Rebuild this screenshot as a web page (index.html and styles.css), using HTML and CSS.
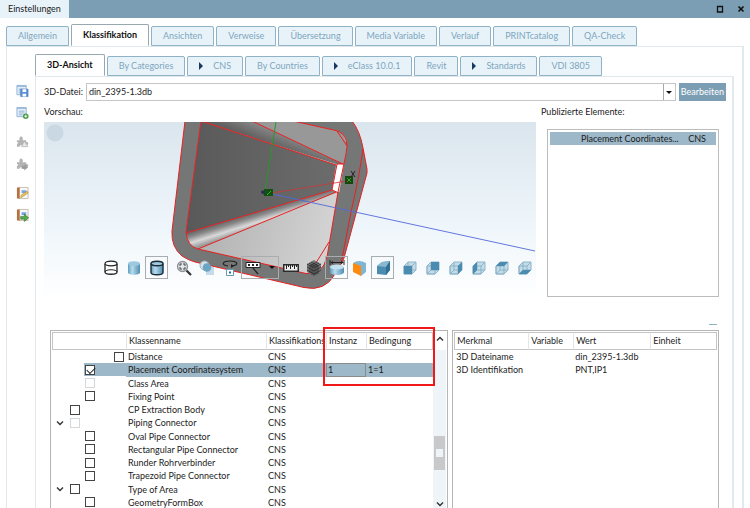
FILE: index.html
```html
<!DOCTYPE html>
<html lang="de">
<head>
<meta charset="utf-8">
<title>Einstellungen</title>
<link rel="stylesheet" href="styles.css">
</head>
<body>
<svg class="defs" aria-hidden="true">
  <defs>
    <linearGradient id="steel" x1="0" x2="1"><stop offset="0" stop-color="#5f9dc0"/><stop offset=".35" stop-color="#b9dcec"/><stop offset="1" stop-color="#4d8db3"/></linearGradient>
    <symbol id="cube" viewBox="0 0 16 16">
      <path d="M2 6l4-4h8v8l-4 4H2z" fill="#c4dce8"/>
      <path d="M2 6h8v8H2zM10 6l4-4M6 2v8h8M6 10l-4 4" fill="none" stroke="#7fa9c0" stroke-width=".8"/>
      <path d="M2 6l4-4h8v8l-4 4H2z" fill="none" stroke="#8fb5c9"/>
    </symbol>
    <symbol id="sheet" viewBox="0 0 14 14">
      <path d="M1 1h10v10H1z" fill="#e3eef8" stroke="#8fb2d6"/>
      <path d="M1 2h10M3 5h6M3 7h6M3 9h4" stroke="#8fb2d6" fill="none"/>
    </symbol>
    <symbol id="puzzle" viewBox="0 0 14 14">
      <path d="M1 5h3c-1-2 0-4 1.500-4S8 3 7 5h4v2c3-1 3 4 0 3v2H7c0-2-3-2-3 0H1v-3c2 0 2-2 0-2z" fill="#b4b4b4"/>
    </symbol>
    <symbol id="book" viewBox="0 0 14 14">
      <path d="M3 1h10v12H3z" fill="#f4f7fb" stroke="#c9bba8"/>
      <path d="M1 1h3v12H1z" fill="#b5713f"/>
      <path d="M6 4h5v3H6z" fill="#79a5dc"/>
    </symbol>
  </defs>
</svg>

<header class="titlebar">
  <h1 class="title">Einstellungen</h1>
  <div class="window-buttons">
    <button type="button" aria-label="Maximieren"><svg viewBox="0 0 8 8"><path d="M1 1.500h6M1.500 1v6h5V1" fill="none" stroke="#111" stroke-width="1.300"/></svg></button>
    <button type="button" aria-label="Schließen"><svg viewBox="0 0 8 8"><path d="M1.500 1.500l5 5M6.500 1.500l-5 5" stroke="#111" stroke-width="1.700"/></svg></button>
  </div>
</header>

<nav class="tabs tabs-main">
  <button type="button">Allgemein</button>
  <button type="button" class="active">Klassifikation</button>
  <button type="button">Ansichten</button>
  <button type="button">Verweise</button>
  <button type="button">Übersetzung</button>
  <button type="button">Media Variable</button>
  <button type="button">Verlauf</button>
  <button type="button">PRINTcatalog</button>
  <button type="button">QA-Check</button>
</nav>

<main class="panel">
  <aside class="sidebar">
    <div class="tools">
      <button type="button" aria-label="Speichern"><svg viewBox="0 0 14 14"><use href="#sheet"/><path d="M5 5h8v8H5z" fill="#5d90d6" stroke="#3e70b8" stroke-width=".6"/><path d="M7 5h4v3H7zM7 10h4v3H7z" fill="#fff"/></svg></button>
      <button type="button" aria-label="Neu"><svg viewBox="0 0 14 14"><use href="#sheet"/><circle cx="10.500" cy="10.500" r="3" fill="#4d9a4a"/><path d="M10.500 9v3M9 10.500h3" stroke="#fff"/></svg></button>
    </div>
    <div class="tools">
      <button type="button" aria-label="Baustein bearbeiten"><svg viewBox="0 0 14 14"><use href="#puzzle"/><path d="M9 6l4 6H6z" fill="#e6e6e6" stroke="#aaa" stroke-width=".6"/></svg></button>
      <button type="button" aria-label="Baustein übernehmen"><svg viewBox="0 0 14 14"><use href="#puzzle"/><path d="M6 9h3V7l4 3.500-4 3.500v-2H6z" fill="#9d9d9d"/></svg></button>
    </div>
    <div class="tools">
      <button type="button" aria-label="Katalog bearbeiten"><svg viewBox="0 0 14 14"><use href="#book"/><path d="M5 12l1-3 6-4 1 2-6 4z" fill="#edc558" stroke="#a88228" stroke-width=".6"/></svg></button>
      <button type="button" aria-label="Katalog übernehmen"><svg viewBox="0 0 14 14"><use href="#book"/><path d="M5 8.500h4V6l4.500 4L9 14v-2.500H5z" fill="#57a84d" stroke="#2c7029" stroke-width=".6"/></svg></button>
    </div>
  </aside>

  <div class="content">
    <nav class="tabs tabs-sub">
      <button type="button" class="active">3D-Ansicht</button>
      <button type="button">By Categories</button>
      <button type="button"><i class="marker"></i>CNS</button>
      <button type="button">By Countries</button>
      <button type="button"><i class="marker"></i>eClass 10.0.1</button>
      <button type="button">Revit</button>
      <button type="button"><i class="marker"></i>Standards</button>
      <button type="button">VDI 3805</button>
    </nav>

    <section class="page">
      <div class="file-row">
        <label for="file">3D-Datei:</label>
        <div class="combo">
          <select id="file"><option>din_2395-1.3db</option></select>
          <span class="combo-arrow"></span>
        </div>
        <button type="button" class="primary">Bearbeiten</button>
      </div>

      <div class="upper">
        <section class="preview">
          <h2>Vorschau:</h2>
          <div class="viewer">
            <svg class="scene" viewBox="44 122 492 178" role="img" aria-label="3D-Profil">
              <defs>
                <linearGradient id="sky" x1="0" x2="0" y1="0" y2="1"><stop offset="0" stop-color="#dbe5ed"/><stop offset=".55" stop-color="#edf5fa"/><stop offset="1" stop-color="#fff"/></linearGradient>
                <linearGradient id="dark" x1="0" x2="1"><stop offset="0" stop-color="#595959"/><stop offset="1" stop-color="#6c6c6c"/></linearGradient>
                <linearGradient id="floor" x1="0" x2="1" y1="0" y2=".3"><stop offset="0" stop-color="#a4a4a4"/><stop offset="1" stop-color="#d2d2d2"/></linearGradient>
                <linearGradient id="fold" gradientUnits="userSpaceOnUse" x1="250" y1="213" x2="255" y2="229"><stop offset="0" stop-color="#616161"/><stop offset=".3" stop-color="#8a8a8a"/><stop offset=".65" stop-color="#d9d9d9"/><stop offset="1" stop-color="#999"/></linearGradient>
                <linearGradient id="ceil" gradientUnits="userSpaceOnUse" x1="284" y1="150" x2="292" y2="130"><stop offset="0" stop-color="#616161"/><stop offset="1" stop-color="#999"/></linearGradient>
              </defs>
              <rect x="44" y="122" width="492" height="178" fill="url(#sky)"/>
              <circle cx="55" cy="133" r="8.500" fill="#c9d8e2"/>
              <path d="M185 121L172 231Q171 247 182 256Q188 260 195 262L304 287.500Q325 292 335 274Q341 265 344 258L367 173V169L363 148Q360 131 352 121Z" fill="#757777" stroke="#e82020"/>
              <path d="M201 121L186 232Q187 246 198 249L306 273.500Q322 276 327 257L338 192L346 154Q350 136 338 131L293 121Z" fill="url(#floor)"/>
              <path d="M252 121H293L338 131Q349 137 346 154L344 164Z" fill="#989898"/>
              <path d="M201 121H252L343 164H336Z" fill="url(#ceil)"/>
              <path d="M201 121L336 165L332 190L186 233Z" fill="url(#dark)"/>
              <path d="M186 233L332 190L338 192L198 249Q187 245 186 233Z" fill="url(#fold)"/>
              <path d="M337 164H344L339 193L332 190Z" fill="#fff"/>
              <path d="M201 121L186 232Q187 246 198 249L306 273.500Q322 276 327 257L338 192L346 154Q350 136 338 131L293 121M201 121L336 165M252 121L343 164M186 233L332 190M198 249L336 192M337 164H344M332 190L339 193M337 164L332 190M337 131L347 146M329 242L309 274M363 149Q359 178 351 212L341 264" fill="none" stroke="#e82020"/>
              <path d="M276 122L265 190" stroke="#259a28"/>
              <path d="M272 193L347 181" stroke="#cf3535" stroke-width=".8"/>
              <path d="M272 194L535 251" stroke="#5468dd" stroke-width=".9"/>
              <path d="M264 189h9v7h-9z" fill="#12520f"/><path d="M261 191l4-1v5l-4-2z" fill="#25354a"/><path d="M267 195l4-4" stroke="#39ad35"/>
              <path d="M345 176h8v8h-8z" fill="#17470f"/><path d="M347 178l4 4M351 178l-4 4" stroke="#3c9e2c"/><path d="M351 171l4 6M355 171l-4 6" stroke="#222"/>
            </svg>
            <div class="toolbar">
              <button type="button" aria-label="Drahtmodell"><svg viewBox="0 0 16 16"><path d="M2 4v8c0 3 12 3 12 0V4" fill="#fff" stroke="#222" stroke-width="1.300"/><path d="M2 12c0-3 12-3 12 0" fill="none" stroke="#222"/><ellipse cx="8" cy="3.500" rx="6" ry="2.300" fill="#fff" stroke="#222" stroke-width="1.300"/></svg></button>
              <button type="button" aria-label="Schattiert"><svg viewBox="0 0 16 16"><path d="M2 3.500v9c0 3 12 3 12 0v-9" fill="url(#steel)"/><ellipse cx="8" cy="3.500" rx="6" ry="2.300" fill="#9dc9df"/></svg></button>
              <button type="button" class="boxed" aria-label="Schattiert mit Kanten"><svg viewBox="0 0 16 16"><path d="M2 3.500v9c0 3 12 3 12 0v-9" fill="url(#steel)" stroke="#1c2c36" stroke-width="1.400"/><ellipse cx="8" cy="3.500" rx="6" ry="2.300" fill="#9dc9df" stroke="#1c2c36" stroke-width="1.400"/></svg></button>
              <span class="gap"></span>
              <button type="button" aria-label="Zoom"><svg viewBox="0 0 16 16"><circle cx="6.500" cy="6.500" r="5" fill="#e2e6e8" stroke="#8b9297" stroke-width="1.300"/><path d="M4 6V4h2M9 6V4H7M4 7v2h2M9 7v2H7" fill="none" stroke="#444"/><path d="M10.500 10.500l4.500 4.500" stroke="#333" stroke-width="2.200"/></svg></button>
              <button type="button" aria-label="Ansicht"><svg viewBox="0 0 16 16"><circle cx="5.500" cy="5.500" r="4.500" fill="#d4dfe6" stroke="#9fb2be"/><path d="M7 7h8v8H7z" fill="#c5dbe8"/><circle cx="8" cy="7.500" r="4.300" fill="#6ba5c6"/></svg></button>
              <button type="button" aria-label="Drehen"><svg viewBox="0 0 16 16"><path d="M10 6c8-1 5-5-2-5S-2 5 6 6" fill="none" stroke="#222" stroke-width="1.200"/><path d="M9 4v4l3-2z" fill="#222"/><path d="M4.500 9.500h7v6h-7z" fill="#fff" stroke="#659abb"/><path d="M7 11.500h2v2H7z" fill="#236c9b"/></svg></button>
              <button type="button" class="boxed wide" aria-label="Messen"><svg viewBox="0 0 16 16"><path d="M1 2.500h14v5H1z" fill="#fff" stroke="#222"/><path d="M3 5h2M7 5h2M11 5h2" stroke="#222" stroke-width="2"/><path d="M8 8l5 6" stroke="#222" stroke-width="1.300"/></svg><span class="down"></span></button>
              <button type="button" aria-label="Lineal"><svg viewBox="0 0 16 16"><path d="M0 4h16v8H0z" fill="#2c2c2c"/><path d="M1.500 5.500h13v5h-13z" fill="#eee"/><path d="M3.500 5v4M5.500 5v2M7.500 5v4M9.500 5v2M11.500 5v4M13.500 5v2" stroke="#222"/></svg></button>
              <button type="button" aria-label="Netz"><svg viewBox="0 0 16 16"><path d="M8 0l7 4v8l-7 4-7-4V4z" fill="#777"/><path d="M1 4l7 4 7-4M8 8v8M3 3l7 4v8M5 2l7 4v8M13 3L6 7v8M11 2L4 6v7M1 7l7 4 7-4M1 10l7 4 7-4" fill="none" stroke="#1c1c1c" stroke-width=".7"/></svg></button>
              <button type="button" class="boxed" aria-label="Bemaßung"><svg viewBox="0 0 16 16"><path d="M1 7v5c0 4 14 4 14 0V7" fill="url(#steel)"/><ellipse cx="8" cy="7" rx="7" ry="2.500" fill="#c3e1ee"/><path d="M1 0v5M15 0v5M2 2.500h12" stroke="#222"/><path d="M1 2.500l3-1.500v3zM15 2.500l-3-1.500v3z" fill="#222"/></svg></button>
              <button type="button" aria-label="Schnitt"><svg viewBox="0 0 16 16"><path d="M1 3q6-4 13 0v9l-5 4z" fill="#81b6d2"/><path d="M1 3l8 3v10l-8-4z" fill="#ff8a0c"/></svg></button>
              <button type="button" class="boxed" aria-label="Perspektive"><svg viewBox="0 0 16 16"><path d="M2 6l5-4 8-1v9l-4 5-9-1z" fill="#4c8cb1"/><path d="M2 6l5-4 8-1-4 6z" fill="#89b8d0"/><path d="M11 7l4-6v9l-4 5z" fill="#326f94"/></svg></button>
              <span class="gap"></span>
              <button type="button" aria-label="Vorne"><svg viewBox="0 0 16 16"><use href="#cube"/><path d="M2 6h8v8H2z" fill="#4b8bb0"/></svg></button>
              <button type="button" aria-label="Hinten"><svg viewBox="0 0 16 16"><use href="#cube"/><path d="M6 2h8v8H6z" fill="#4b8bb0"/></svg></button>
              <button type="button" aria-label="Rechts"><svg viewBox="0 0 16 16"><use href="#cube"/><path d="M10 6l4-4v8l-4 4z" fill="#4b8bb0"/></svg></button>
              <button type="button" aria-label="Links"><svg viewBox="0 0 16 16"><use href="#cube"/><path d="M2 6l4-4v8l-4 4z" fill="#4b8bb0"/></svg></button>
              <button type="button" aria-label="Oben"><svg viewBox="0 0 16 16"><use href="#cube"/><path d="M2 6l4-4h8l-4 4z" fill="#4b8bb0"/></svg></button>
              <button type="button" aria-label="Unten"><svg viewBox="0 0 16 16"><use href="#cube"/><path d="M2 14l4-4h8l-4 4z" fill="#4b8bb0"/></svg></button>
            </div>
          </div>
        </section>

        <section class="published">
          <h2>Publizierte Elemente:</h2>
          <ul class="listbox">
            <li><span>Placement Coordinates...</span><span>CNS</span></li>
          </ul>
        </section>
      </div>

      <div class="splitter"><span></span></div>

      <div class="lower">
        <section class="tree-pane">
          <table class="grid tree">
            <colgroup><col class="c-node"><col class="c-name"><col class="c-system"><col class="c-inst"><col></colgroup>
            <thead><tr><th></th><th>Klassenname</th><th>Klassifikations</th><th>Instanz</th><th>Bedingung</th></tr></thead>
            <tbody>
              <tr><td><div class="node l4"><input type="checkbox" id="k1"></div></td><td><label for="k1">Distance</label></td><td>CNS</td><td></td><td></td></tr>
              <tr class="selected"><td><div class="node l2"><input type="checkbox" id="k2" checked></div></td><td><label for="k2">Placement Coordinatesystem</label></td><td>CNS</td><td class="focus">1</td><td>1=1</td></tr>
              <tr><td><div class="node l2"><input type="checkbox" id="k3" disabled></div></td><td><label for="k3">Class Area</label></td><td>CNS</td><td></td><td></td></tr>
              <tr><td><div class="node l2"><input type="checkbox" id="k4"></div></td><td><label for="k4">Fixing Point</label></td><td>CNS</td><td></td><td></td></tr>
              <tr><td><div class="node l1"><input type="checkbox" id="k5"></div></td><td><label for="k5">CP Extraction Body</label></td><td>CNS</td><td></td><td></td></tr>
              <tr><td><div class="node l0"><svg class="chev" viewBox="0 0 8 8"><path d="M1 2.500l3 3 3-3" fill="none" stroke="#333" stroke-width="1.400"/></svg><input type="checkbox" id="k6" disabled></div></td><td><label for="k6">Piping Connector</label></td><td>CNS</td><td></td><td></td></tr>
              <tr><td><div class="node l2"><input type="checkbox" id="k7"></div></td><td><label for="k7">Oval Pipe Connector</label></td><td>CNS</td><td></td><td></td></tr>
              <tr><td><div class="node l2"><input type="checkbox" id="k8"></div></td><td><label for="k8">Rectangular Pipe Connector</label></td><td>CNS</td><td></td><td></td></tr>
              <tr><td><div class="node l2"><input type="checkbox" id="k9"></div></td><td><label for="k9">Runder Rohrverbinder</label></td><td>CNS</td><td></td><td></td></tr>
              <tr><td><div class="node l2"><input type="checkbox" id="k10"></div></td><td><label for="k10">Trapezoid Pipe Connector</label></td><td>CNS</td><td></td><td></td></tr>
              <tr><td><div class="node l0"><svg class="chev" viewBox="0 0 8 8"><path d="M1 2.500l3 3 3-3" fill="none" stroke="#333" stroke-width="1.400"/></svg><input type="checkbox" id="k11"></div></td><td><label for="k11">Type of Area</label></td><td>CNS</td><td></td><td></td></tr>
              <tr><td><div class="node l2"><input type="checkbox" id="k12"></div></td><td><label for="k12">GeometryFormBox</label></td><td>CNS</td><td></td><td></td></tr>
            </tbody>
          </table>
          <div class="scrollbar">
            <svg class="chev" viewBox="0 0 8 8"><path d="M1 5.500l3-3 3 3" fill="none" stroke="#333" stroke-width="1.400"/></svg>
            <div class="thumb"></div>
            <svg class="chev" viewBox="0 0 8 8"><path d="M1 2.500l3 3 3-3" fill="none" stroke="#333" stroke-width="1.400"/></svg>
          </div>
          <div class="highlight"></div>
        </section>

        <section class="attr-pane">
          <table class="grid attrs">
            <colgroup><col class="a-key"><col class="a-var"><col class="a-value"><col></colgroup>
            <thead><tr><th>Merkmal</th><th>Variable</th><th>Wert</th><th>Einheit</th></tr></thead>
            <tbody>
              <tr><td>3D Dateiname</td><td></td><td>din_2395-1.3db</td><td></td></tr>
              <tr><td>3D Identifikation</td><td></td><td>PNT,IP1</td><td></td></tr>
            </tbody>
          </table>
        </section>
      </div>
    </section>
  </div>
</main>
</body>
</html>
```
FILE: styles.css
```css
* { box-sizing: border-box; }

body {
  margin: 0;
  height: 100vh;
  overflow: hidden;
  display: flex;
  flex-direction: column;
  background: #fff;
  color: #1c1c1c;
  font: 9px/12px Lato, "Open Sans", sans-serif;
}

button, select, input { font: inherit; color: inherit; margin: 0; padding: 0; }
button { border: 0; background: none; }
h1, h2 { margin: 0; font: inherit; }
svg { display: block; }
.defs { position: absolute; width: 0; height: 0; }

/* Title bar */
.titlebar {
  display: flex;
  justify-content: space-between;
  height: 18px;
  flex: none;
  background: #7c9eb4;
}
.title { padding: 3px 8px; background: #e8f3f9; }
.window-buttons { display: flex; align-items: center; gap: 13px; padding-right: 5px; }
.window-buttons svg { width: 8px; height: 8px; }

/* Tabs */
.tabs { display: flex; align-items: flex-end; gap: 2px; height: 22px; flex: none; }
.tabs button {
  height: 20px;
  padding: 0 11px;
  display: flex;
  align-items: center;
  gap: 10px;
  border: 1px solid #8fb2c7;
  border-radius: 2px 2px 0 0;
  background: #e8f3f9;
  color: #7ea6be;
  white-space: nowrap;
}
.tabs .active {
  height: 22px;
  border-color: #99a7af;
  border-bottom-color: #fff;
  background: #fff;
  color: #111;
  font-weight: 700;
}
.tabs-main { margin: 6px 6px 0; }
.marker { border: 4px solid transparent; border-left: 4px solid #173a63; border-right: 0; }

/* Panels */
.panel {
  flex: 1;
  min-height: 0;
  display: flex;
  margin: 0 6px;
  border: solid #e2e9ec;
  border-width: 1px 2px 0 1px;
}
.sidebar {
  width: 28px;
  flex: none;
  display: flex;
  flex-direction: column;
  gap: 15px;
  padding: 37px 0 0 9px;
}
.tools { display: flex; flex-direction: column; gap: 8px; }
.tools svg { width: 13px; height: 14px; }
.content { flex: 1; min-width: 0; display: flex; flex-direction: column; padding: 7px 8px 0 0; }
.page {
  flex: 1;
  min-height: 0;
  display: flex;
  flex-direction: column;
  padding: 6px 6px 0 8px;
  border: solid #e2e9ec;
  border-width: 1px 2px 0 1px;
}

/* File row */
.file-row { display: flex; align-items: center; gap: 3px; }
.combo { position: relative; flex: 1; }
.combo select {
  appearance: none;
  display: block;
  width: 100%;
  height: 18px;
  padding: 0 2px;
  border: 1px solid #c6c6c6;
  border-radius: 0;
  background: #fff;
}
.combo-arrow {
  position: absolute;
  inset: 1px 1px 1px auto;
  width: 12px;
  border-left: 1px solid #aaa;
  display: grid;
  place-items: center;
  pointer-events: none;
}
.combo-arrow::after, .down {
  content: "";
  border: 3px solid transparent;
  border-top-color: #111;
  border-bottom: 0;
}
.primary { height: 18px; padding: 0 2px; background: #7c9eb4; color: #fff; }

/* Preview and published list */
.upper { display: flex; gap: 5px; padding: 4px 7px 0 0; }
.preview { flex: 1; min-width: 0; }
.preview h2, .published h2 { line-height: 13px; }
.viewer { position: relative; margin-top: 4px; }
.scene { width: 100%; }
.toolbar { position: absolute; right: 0; bottom: 21px; display: flex; align-items: center; }
.toolbar button { width: 23px; height: 23px; display: flex; align-items: center; justify-content: center; }
.toolbar button svg { width: 16px; height: 16px; }
.toolbar .boxed { border: 1px solid #a9adb0; }
.toolbar .wide { width: 38px; justify-content: space-between; padding: 0 3px; }
.gap { width: 4px; }
.published { width: 178px; flex: none; }
.published h2 { white-space: nowrap; }
.listbox {
  list-style: none;
  height: 168px;
  margin: 11px 0 0 6px;
  padding: 2px;
  border: 1px solid #bcbcbc;
}
.listbox li { display: flex; gap: 8px; padding: 1px 10px 0 31px; background: #9db8c8; white-space: nowrap; }
.listbox li span:first-child { flex: 1; }

.splitter { display: flex; justify-content: flex-end; padding: 0 9px 5px; margin-top: 24px; }
.splitter span { width: 8px; height: 1px; background: #8fb2c7; }

/* Lower tables */
.lower { flex: 1; min-height: 0; display: flex; gap: 4px; padding: 0 7px 0 6px; }
.tree-pane {
  position: relative;
  flex: 3;
  min-width: 0;
  display: flex;
  padding: 1px 1px 0;
  border: 1px solid #b5b5b5;
  border-bottom: 0;
}
.attr-pane { flex: 2; min-width: 0; padding: 1px 1px 0; border: 1px solid #b5b5b5; border-bottom: 0; }
.grid { width: 100%; border-collapse: separate; border-spacing: 0; table-layout: fixed; align-self: flex-start; }
.grid th {
  height: 18px;
  padding: 0 0 0 2px;
  border: solid #c4c4c4;
  border-width: 1px 0;
  font-weight: 400;
  text-align: left;
  white-space: nowrap;
}
.grid th + th { border-left: 1px solid #e0e6ea; }
.grid th:first-child { border-left: 1px solid #c4c4c4; }
.grid th:last-child { border-right: 1px solid #c4c4c4; }
.grid td { padding: 0 0 0 2px; white-space: nowrap; line-height: 13px; }
.tree { height: 177px; }
.tree td:first-child { padding: 0; height: 13px; }
.c-node { width: 74px; }
.c-name { width: 140px; }
.c-system { width: 60px; }
.c-inst { width: 40px; }
.a-key { width: 74px; }
.a-var { width: 45px; }
.a-value { width: 77px; }

.node { display: flex; align-items: center; gap: 6px; height: 13px; padding-left: 1px; }
.l0 { margin-left: 3px; }
.l1 { margin-left: 17px; }
.l2 { margin-left: 32px; }
.l4 { margin-left: 61px; }
.node input {
  appearance: none;
  width: 10px;
  height: 10px;
  border: 1px solid #444;
  background: #fff;
}
.node input:disabled { border-color: #d4d8db; }
.node input:checked::after {
  content: "";
  display: block;
  width: 7px;
  height: 4px;
  margin: 1px 0 0 1px;
  border: solid #222;
  border-width: 0 0 1px 1px;
  rotate: -45deg;
}
.chev { width: 8px; height: 8px; flex: none; }
.selected td:not(:first-child), .selected .node { background: #9db8c8; }
.grid .focus { outline: 1px solid #8b8c8c; outline-offset: -1px; }

.scrollbar {
  width: 13px;
  flex: none;
  display: flex;
  flex-direction: column;
  align-items: center;
  justify-content: space-between;
  padding: 3px 0 0;
  background: linear-gradient(#fff 18px, #eef4f7 18px);
}
.thumb { width: 11px; height: 34px; margin-top: 62px; border: solid #c9c9cb; border-width: 13px 2px; background: #eef4f7; }
.highlight {
  position: absolute;
  left: 272px;
  right: 12px;
  top: -4px;
  height: 59px;
  border: 2px solid #f01818;
}
```
